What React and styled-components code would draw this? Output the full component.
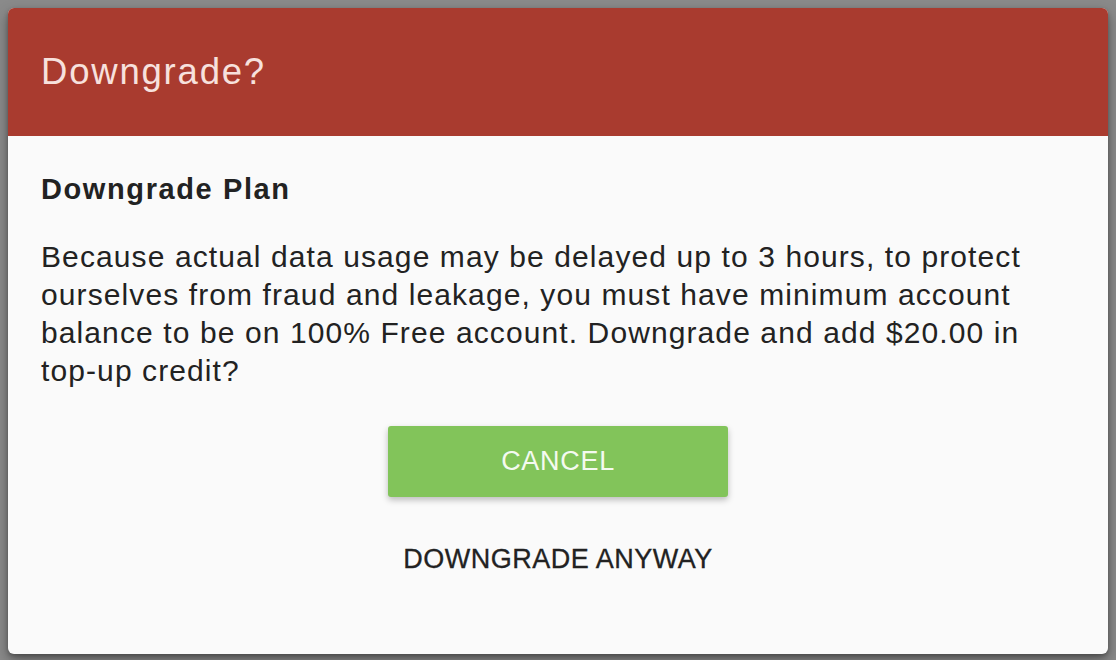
import React from "react";
import styled, { createGlobalStyle } from "styled-components";

const Global = createGlobalStyle`
  html, body { margin: 0; padding: 0; }
  body {
    background: #8a8a8a;
    font-family: "Liberation Sans", Arial, sans-serif;
    width: 1116px;
    height: 660px;
    overflow: hidden;
  }
`;

const Backdrop = styled.div`
  box-sizing: border-box;
  width: 1116px;
  height: 660px;
  padding: 8px 8px 6px 8px;
  display: flex;
`;

const Dialog = styled.div`
  flex: 1;
  display: flex;
  flex-direction: column;
  background: #fafafa;
  border-radius: 6px;
  overflow: hidden;
  box-shadow: 0 6px 14px rgba(0, 0, 0, 0.35), 0 2px 4px rgba(0, 0, 0, 0.25);
`;

const Header = styled.div`
  height: 128px;
  background: #a93b2f;
  display: flex;
  align-items: center;
  padding: 0 33px;
  box-sizing: border-box;
`;

const Title = styled.h1`
  margin: 0;
  font-weight: 400;
  font-size: 36.5px;
  color: #f7e1dd;
  letter-spacing: 1.8px;
`;

const Body = styled.div`
  padding: 38px 33px 0 33px;
  display: flex;
  flex-direction: column;
`;

const Subtitle = styled.h2`
  margin: 0;
  font-size: 29px;
  line-height: 31px;
  font-weight: 700;
  color: #222;
  letter-spacing: 1.6px;
`;

const Text = styled.p`
  margin: 33px 0 0 0;
  font-size: 30px;
  line-height: 38px;
  color: #222;
  letter-spacing: 1.1px;
`;

const Actions = styled.div`
  display: flex;
  flex-direction: column;
  align-items: center;
  margin-top: 36px;
`;

const Button = styled.button`
  font-family: inherit;
  border: none;
  cursor: pointer;
  text-transform: uppercase;
  font-size: 27px;
  border-radius: 3px;
  ${(p) =>
    p.$primary
      ? `
    width: 340px;
    height: 71px;
    background: #82c45a;
    color: #f4faf0;
    letter-spacing: 0.7px;
    box-shadow: 0 3px 6px rgba(0,0,0,0.25);
  `
      : `
    margin-top: 43px;
    background: transparent;
    color: #222;
    font-weight: 500;
    padding: 0;
    line-height: 38px;
    letter-spacing: 0.5px;
    -webkit-text-stroke: 0.3px #222;
  `}
`;

export default function App() {
  return (
    <>
      <Global />
      <Backdrop>
        <Dialog>
          <Header>
            <Title>Downgrade?</Title>
          </Header>
          <Body>
            <Subtitle>Downgrade Plan</Subtitle>
            <Text>
              Because actual data usage may be delayed up to 3 hours, to protect
              ourselves from fraud and leakage, you must have minimum account
              balance to be on 100% Free account. Downgrade and add $20.00 in
              top-up credit?
            </Text>
            <Actions>
              <Button $primary>Cancel</Button>
              <Button>Downgrade anyway</Button>
            </Actions>
          </Body>
        </Dialog>
      </Backdrop>
    </>
  );
}
